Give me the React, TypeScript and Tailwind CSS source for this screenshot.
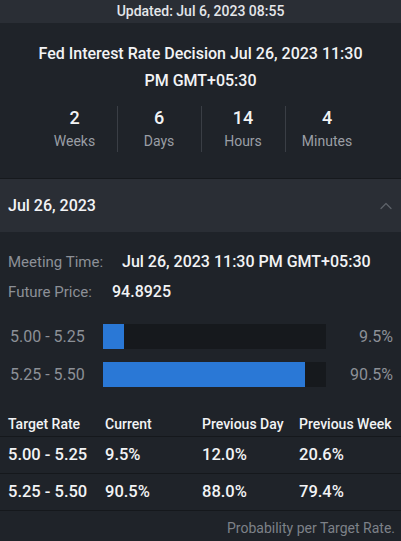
import { ChevronUp } from "lucide-react";

const COUNTDOWN = [
  { value: "2", label: "Weeks" },
  { value: "6", label: "Days" },
  { value: "14", label: "Hours" },
  { value: "4", label: "Minutes" },
];

const BARS = [
  { range: "5.00 - 5.25", pct: 9.5 },
  { range: "5.25 - 5.50", pct: 90.5 },
];

const ROWS = [
  { range: "5.00 - 5.25", current: "9.5%", day: "12.0%", week: "20.6%" },
  { range: "5.25 - 5.50", current: "90.5%", day: "88.0%", week: "79.4%" },
];

export default function App() {
  return (
    <div className="w-[401px] h-[541px] overflow-hidden bg-[#1f2329] text-[#f2f3f5] font-['Roboto',_sans-serif]">
      <div className="h-[23px] bg-[#2a2e35] flex items-center justify-center text-[14px] font-medium text-[#e4e6ea]">
        Updated: Jul 6, 2023 08:55
      </div>

      <div className="pt-[17px] pb-[26px] border-b border-[#16191d]">
        <h1 className="text-center text-[16px] font-medium leading-[27px] px-8">
          Fed Interest Rate Decision Jul 26, 2023 11:30 PM GMT+05:30
        </h1>
        <div className="mt-[12px] flex justify-center">
          {COUNTDOWN.map((c, i) => (
            <div
              key={c.label}
              className={`w-[84px] flex flex-col items-center ${i > 0 ? "border-l border-[#3a3e45]" : ""}`}
            >
              <span className="text-[18px] font-medium leading-[24px]">{c.value}</span>
              <span className="text-[14px] leading-[22px] text-[#9a9ea5]">{c.label}</span>
            </div>
          ))}
        </div>
      </div>

      <div className="h-[53px] bg-[#2a2e35] flex items-center justify-between pl-2 pr-[5px]">
        <span className="text-[16px] font-medium">Jul 26, 2023</span>
        <ChevronUp size={20} strokeWidth={1.5} className="text-[#5d6168]" />
      </div>

      <div className="px-2 pt-[19px]">
        <div className="flex items-center h-[22px]">
          <span className="w-[114px] text-[15px] text-[#8c9097]">Meeting Time:</span>
          <span className="text-[16px] font-medium">Jul 26, 2023 11:30 PM GMT+05:30</span>
        </div>
        <div className="flex items-center h-[22px] mt-[8px]">
          <span className="w-[104px] text-[15px] text-[#8c9097]">Future Price:</span>
          <span className="text-[16px] font-medium">94.8925</span>
        </div>

        <div className="mt-[21px] flex flex-col gap-[13px]">
          {BARS.map((b) => (
            <div key={b.range} className="flex items-center h-[25px]">
              <span className="w-[95px] pl-[2px] text-[16px] text-[#8c9097]">{b.range}</span>
              <div className="w-[223px] h-[25px] bg-[#16191d]">
                <div className="h-full bg-[#2a78d6]" style={{ width: `${b.pct}%` }} />
              </div>
              <span className="flex-1 text-right text-[16px] text-[#8c9097]">{b.pct}%</span>
            </div>
          ))}
        </div>
      </div>

      <div className="mt-[26px]">
        <div className="grid grid-cols-[97px_97px_97px_1fr] px-2 h-[24px] items-center text-[14px] font-medium border-b border-[#15181c]">
          <span>Target Rate</span>
          <span>Current</span>
          <span>Previous Day</span>
          <span>Previous Week</span>
        </div>
        {ROWS.map((r) => (
          <div
            key={r.range}
            className="grid grid-cols-[97px_97px_97px_1fr] px-2 h-[37px] items-center text-[16.5px] font-medium border-b border-[#15181c]"
          >
            <span>{r.range}</span>
            <span>{r.current}</span>
            <span>{r.day}</span>
            <span>{r.week}</span>
          </div>
        ))}
        <div className="text-right pr-[6px] pt-[7px] text-[14px] text-[#7d8188]">
          Probability per Target Rate.
        </div>
      </div>
    </div>
  );
}
